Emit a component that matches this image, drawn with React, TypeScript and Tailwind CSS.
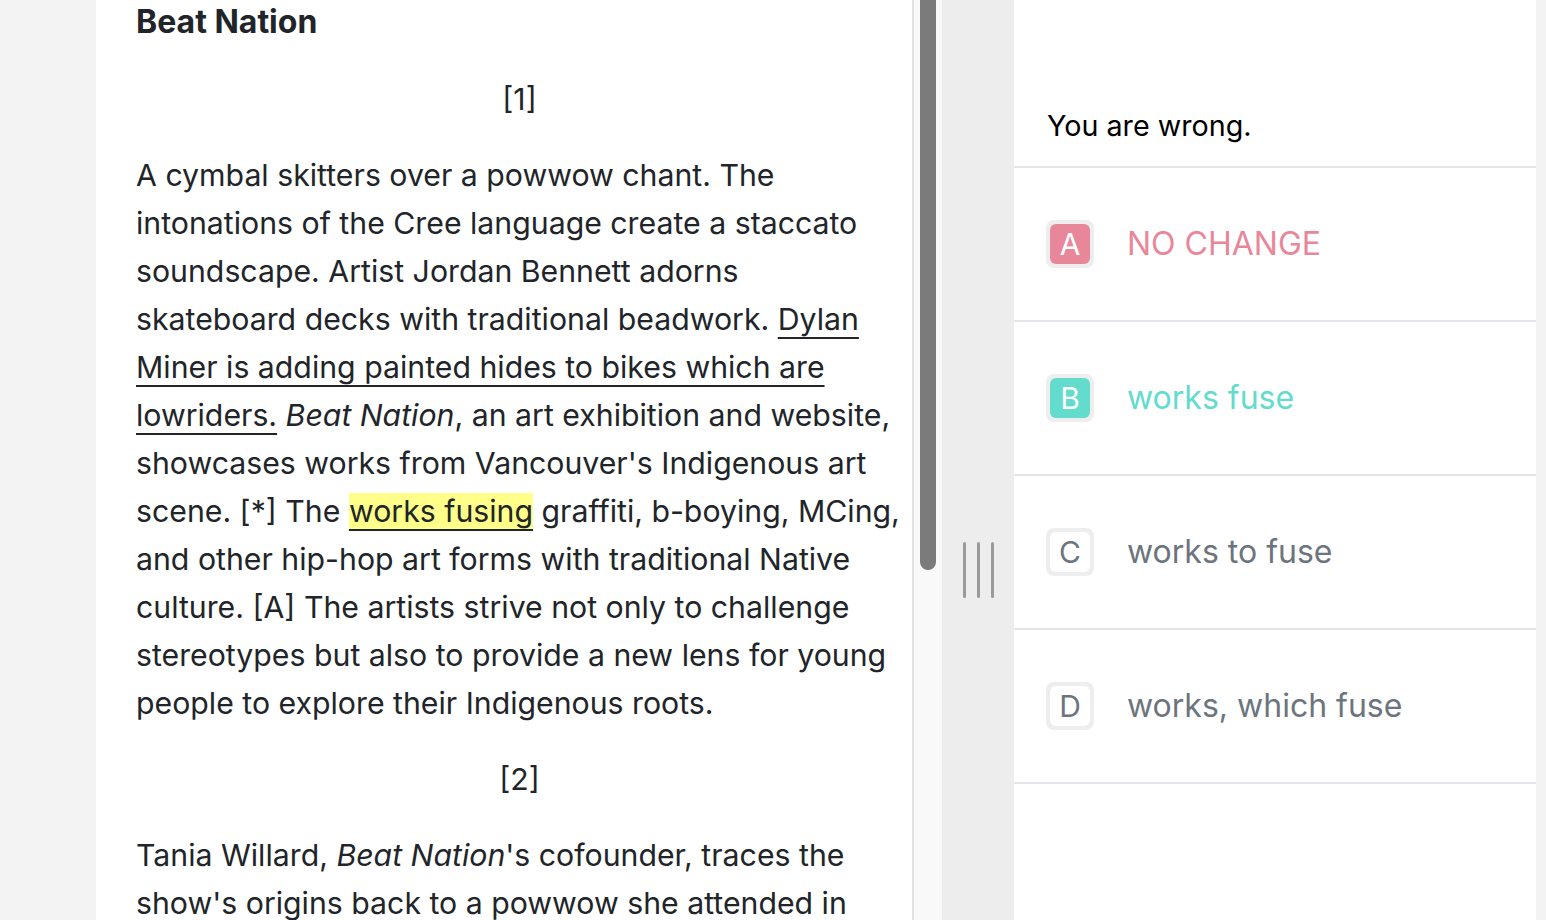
import React from "react";

const FONT = "font-['Inter','Noto_Sans',sans-serif]";

interface Choice {
  letter: string;
  text: string;
  state: "wrong" | "right" | "idle";
}

const choices: Choice[] = [
  { letter: "A", text: "NO CHANGE", state: "wrong" },
  { letter: "B", text: "works fuse", state: "right" },
  { letter: "C", text: "works to fuse", state: "idle" },
  { letter: "D", text: "works, which fuse", state: "idle" },
];

function ChoiceRow({ letter, text, state }: Choice) {
  const badge =
    state === "wrong"
      ? "bg-[#e8879a] text-white"
      : state === "right"
      ? "bg-[#63dbcd] text-white"
      : "bg-white text-[#6c757d]";
  const label =
    state === "wrong"
      ? "text-[#e8879a]"
      : state === "right"
      ? "text-[#63dbcd]"
      : "text-[#6c757d]";

  return (
    <div className="h-[154px] border-b-2 border-[#e3e6ea] flex items-center pl-8">
      <div className="w-12 h-12 rounded-lg bg-[#eeeeee] p-1 shrink-0">
        <div className={`w-full h-full rounded-md flex items-center justify-center text-[30px] leading-none ${badge}`}>
          {letter}
        </div>
      </div>
      <span className={`ml-[33px] text-[32px] ${label}`}>{text}</span>
    </div>
  );
}

export default function App() {
  return (
    <div className={`h-screen w-full flex bg-[#f3f3f3] overflow-hidden ${FONT}`}>
      {/* passage */}
      <div className="ml-[96px] w-[818px] bg-white border-r-2 border-[#e2e2e2] shrink-0 overflow-hidden">
        <div className="pl-10 pr-[9px] text-[#212529] text-[30.25px] leading-[48px]">
          <h1 className="text-[32px] font-bold leading-[44px]">Beat Nation</h1>
          <p className="mt-[31px] text-center">[1]</p>
          <p className="mt-[28px]">
            A cymbal skitters over a powwow chant. The intonations of the Cree language create a staccato soundscape.
            Artist Jordan Bennett adorns skateboard decks with traditional beadwork.{" "}
            <span className="underline decoration-2 underline-offset-[7px]">
              Dylan Miner is adding painted hides to bikes which are lowriders.
            </span>{" "}
            <em>Beat Nation</em>, an art exhibition and website, showcases works from Vancouver's Indigenous art scene.
            [*] The{" "}
            <span className="bg-[#ffff8a] underline decoration-2 underline-offset-[7px]">works fusing</span>{" "}
            graffiti, b-boying, MCing, and other hip-hop art forms with traditional Native culture. [A] The artists
            strive not only to challenge stereotypes but also to provide a new lens for young people to explore their
            Indigenous roots.
          </p>
          <p className="mt-[28px] text-center">[2]</p>
          <p className="mt-[28px]">
            Tania Willard, <em>Beat Nation</em>'s cofounder, traces the show's origins back to a powwow she attended in
            Vancouver.
          </p>
        </div>
      </div>

      {/* scrollbar */}
      <div className="w-[28px] bg-[#f9f9f9] shrink-0 px-[6px]">
        <div className="h-[570px] bg-[#7b7b7b] rounded-b-full" />
      </div>

      {/* divider handle */}
      <div className="w-[72px] bg-[#ededed] shrink-0 flex justify-center gap-[11px] pt-[542px]">
        <div className="w-[3px] h-[56px] bg-[#9a9a9a] rounded-full" />
        <div className="w-[3px] h-[56px] bg-[#9a9a9a] rounded-full" />
        <div className="w-[3px] h-[56px] bg-[#9a9a9a] rounded-full" />
      </div>

      {/* question */}
      <div className="w-[522px] bg-white shrink-0">
        <div className="h-[168px] border-b-2 border-[#e3e6ea] flex items-end pl-[33px] pb-[22px]">
          <p className="text-[28.7px] leading-[36px] text-black">You are wrong.</p>
        </div>
        {choices.map((c) => (
          <ChoiceRow key={c.letter} {...c} />
        ))}
      </div>
    </div>
  );
}
